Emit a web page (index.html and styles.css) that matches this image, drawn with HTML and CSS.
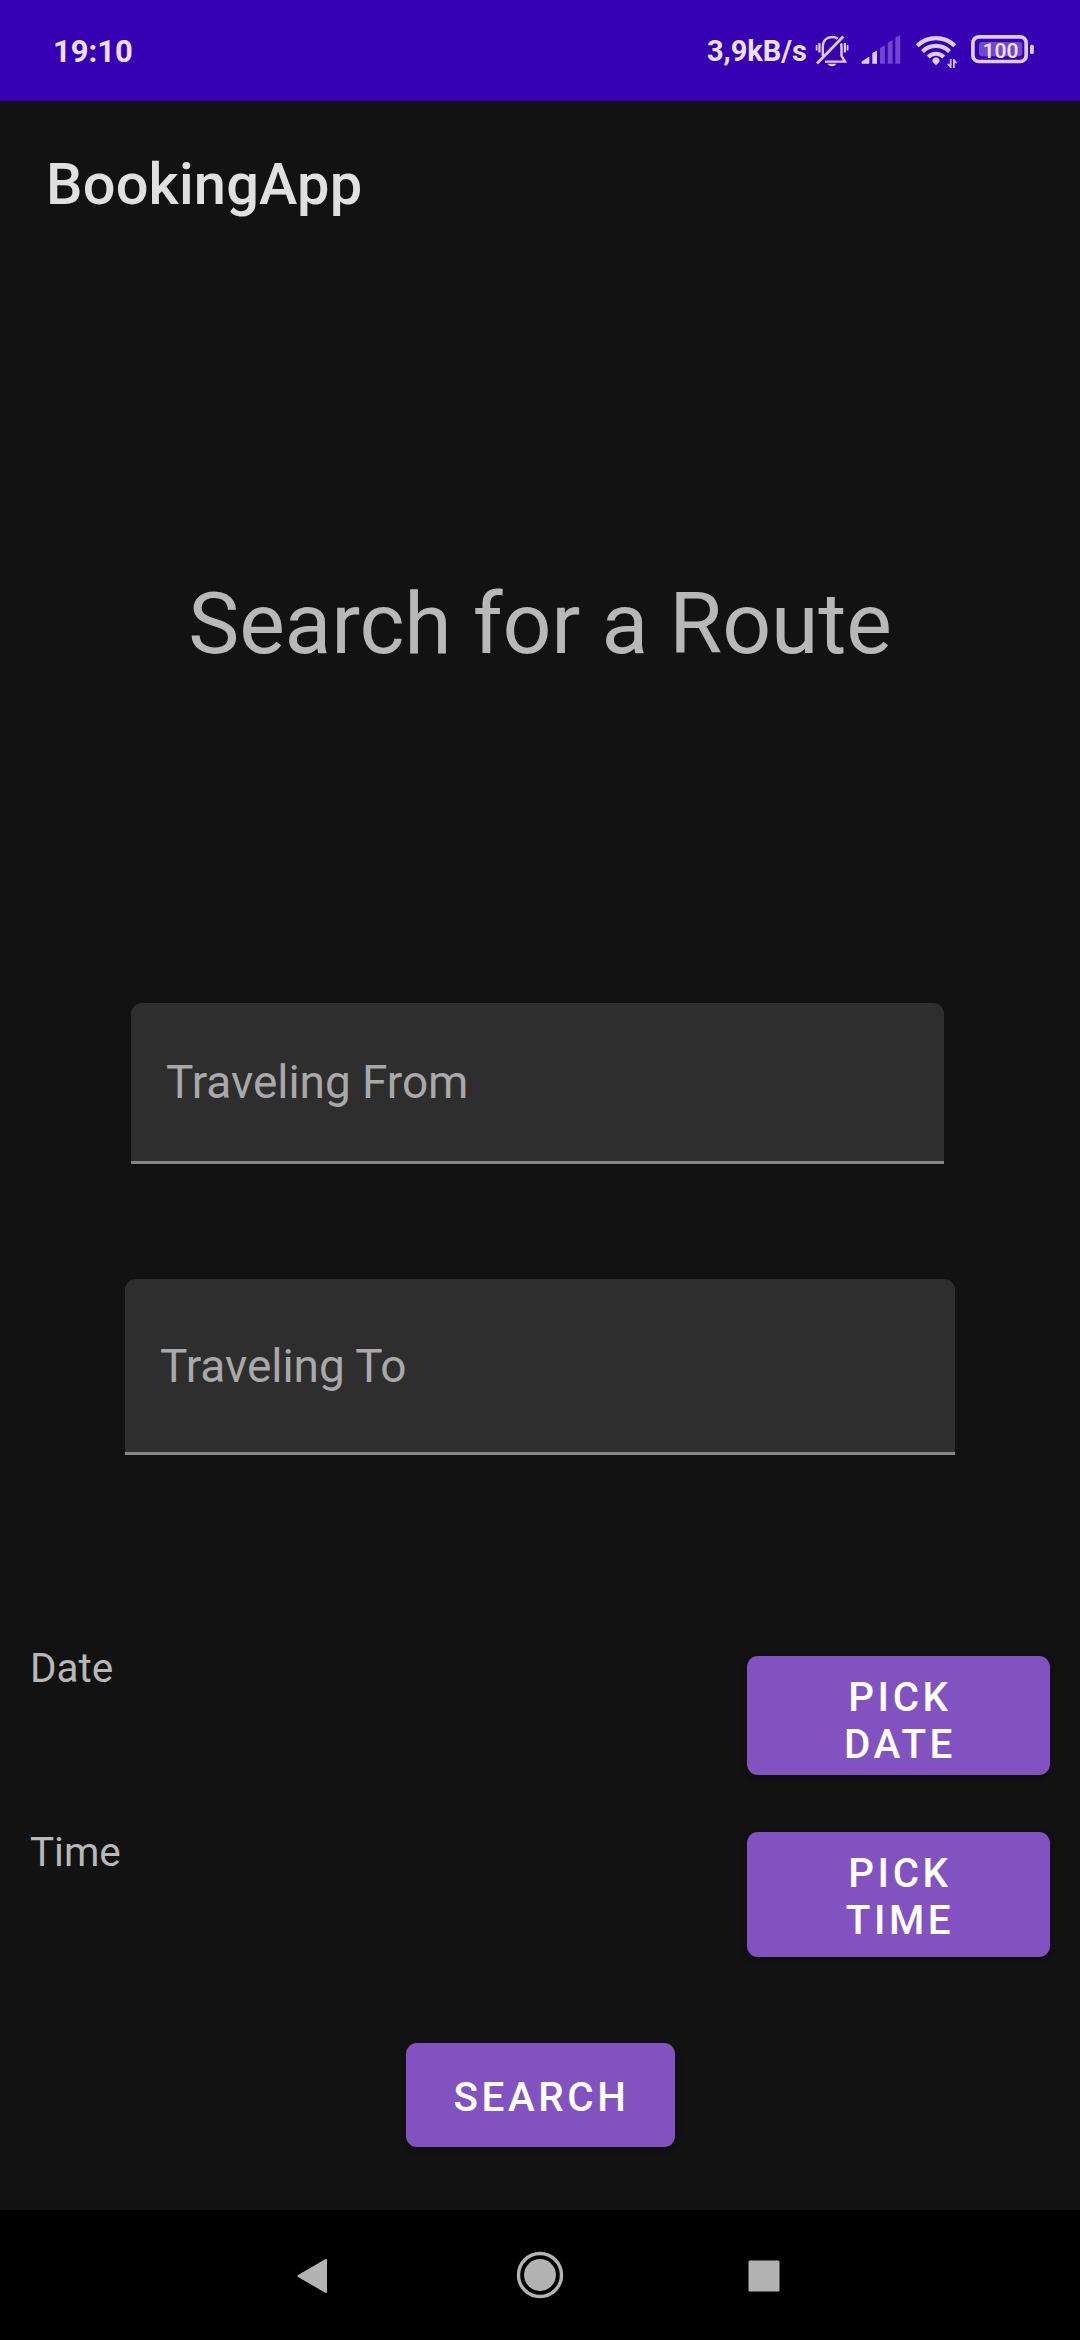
FILE: index.html
```html
<!DOCTYPE html>
<html lang="en">
<head>
<meta charset="utf-8">
<title>BookingApp</title>
<link rel="stylesheet" href="styles.css">
</head>
<body>
<div class="screen">
  <header class="status-bar">
    <span class="clock">19:10</span>
    <div class="status-right">
      <span class="net-speed">3,9kB/s</span>
      <svg class="icon-bell" width="34" height="34" viewBox="815 34 34 34" fill="none" stroke="#dccdfb" stroke-width="2.400">
        <path d="M822.8 56V46.500C822.8 40.500 827 37 832 37c2.300 0 4.200.6 5.700 1.700M841 43.500c.4 1.100.5 2.200.5 3.400V56l3.500 5.600H825"/>
        <path d="M817 63.500 843.300 36.500" stroke-width="2.700"/>
        <path d="M819.400 43v9.500M844.900 43v9.500" stroke-width="2.200"/>
        <path d="M816.600 45v5.500M847.600 45v5.500" stroke-width="1.700"/>
        <path d="M827.300 63.700h9.400q-1.800 2.600-4.700 2.600t-4.700-2.600z" fill="#dccdfb" stroke="none"/>
      </svg>
      <svg class="icon-signal" width="40" height="30" viewBox="861 34 40 30">
        <path fill="#dccdfb" d="M861.700 63.700V61.500l7.600-5V63.700zM872.300 63.700V53.300l4.700-2.800V63.700z"/>
        <path fill="#6f46cd" d="M880 63.700V48l4.900-2.800V63.700zM887.700 63.700V42.700l4.900-2.600V63.700zM895.300 63.700V37.600l4.900-2.600V63.700z"/>
      </svg>
      <svg class="icon-wifi" width="43" height="36" viewBox="915 34 43 36" fill="none" stroke="#dccdfb" stroke-width="4.200">
        <path d="M917.200 45.800a26.800 26.800 0 0 1 37.600 0"/>
        <path d="M922.500 51.600a19 19 0 0 1 27 0"/>
        <path d="M928.200 57a11 11 0 0 1 15.600 0"/>
        <path d="M936 65.200l-3.400-3.100a3.600 3.600 0 1 1 6.800 0z" fill="#dccdfb" stroke="none"/>
        <path d="M951.600 59v9h-1.400l-3.300-4.200h2.900V59zM953 68v-9h1.400l3.100 4.200h-2.700V68z" fill="#cdb9f5" stroke="none"/>
      </svg>
      <svg class="icon-battery" width="64" height="30" viewBox="970 34 64 30">
        <rect x="979" y="42" width="43.300" height="14.300" rx="3" fill="#6f46cd"/>
        <rect x="972.900" y="36.900" width="53.300" height="24.600" rx="6" fill="none" stroke="#dccdfb" stroke-width="3.700"/>
        <rect x="1030" y="44.700" width="3.800" height="9.300" rx="1.500" fill="#dccdfb"/>
        <text class="battery-level" x="1000.500" y="58" text-anchor="middle">100</text>
      </svg>
    </div>
  </header>

  <div class="app-bar">BookingApp</div>

  <main class="content">
    <h1 class="heading">Search for a Route</h1>
    <div class="field field-from"><span>Traveling From</span></div>
    <div class="field field-to"><span>Traveling To</span></div>
    <div class="row row-date">
      <span class="label">Date</span>
      <button class="btn btn-date" type="button">PICK<br>DATE</button>
    </div>
    <div class="row row-time">
      <span class="label">Time</span>
      <button class="btn btn-time" type="button">PICK<br>TIME</button>
    </div>
    <button class="btn btn-search" type="button">SEARCH</button>
  </main>

  <nav class="nav-bar">
    <svg class="nav-back" width="32" height="38" viewBox="0 0 32 38"><path d="M2.500 17.700 28.800 2.400Q31 1.400 31 3.500V34.500Q31 36.600 28.800 35.500L2.500 20.300Q.2 19 2.500 17.700z" fill="#b3b3b3"/></svg>
    <svg class="nav-home" width="48" height="48" viewBox="0 0 48 48"><circle cx="24" cy="24" r="21.500" fill="none" stroke="#b3b3b3" stroke-width="3.400"/><circle cx="24" cy="24" r="15.900" fill="#b3b3b3"/></svg>
    <svg class="nav-recent" width="32" height="32" viewBox="0 0 32 32"><rect x=".5" y=".5" width="31" height="31" rx="1.500" fill="#b3b3b3"/></svg>
  </nav>
</div>
</body>
</html>
```

FILE: styles.css
```css
* { box-sizing: border-box; }

body {
  margin: 0;
  background: #121212;
  font-family: Roboto, "Noto Sans", sans-serif;
}

.screen {
  display: flex;
  flex-direction: column;
  width: 1080px;
  height: 2340px;
  overflow: hidden;
  background: #121212;
}

.status-bar {
  display: flex;
  justify-content: space-between;
  align-items: flex-start;
  height: 101px;
  padding: 34px 46px 0 53px;
  background: #3700b3;
  color: #ebe0ff;
}

.clock {
  font-size: 31px;
  font-weight: 700;
  line-height: 35px;
}

.net-speed {
  font-size: 29px;
  font-weight: 700;
  line-height: 35px;
}

.status-right { display: flex; align-items: flex-start; }
.icon-bell { margin-left: 8px; }
.icon-signal { margin-left: 12px; }
.icon-wifi { margin-left: 14px; }
.icon-battery { margin-left: 12px; }

.battery-level {
  font-size: 21px;
  font-weight: 600;
  fill: #ebe0ff;
}

.app-bar {
  height: 154px;
  padding: 49px 0 0 46px;
  font-size: 57.75px;
  font-weight: 500;
  line-height: 68px;
  letter-spacing: 0.2px;
  color: #e0e0e0;
}

.content {
  display: flex;
  flex: 1;
  flex-direction: column;
  align-items: flex-start;
}

.heading {
  align-self: center;
  margin: 318px 0 0;
  font-size: 86px;
  font-weight: 400;
  line-height: 102px;
  letter-spacing: -0.15px;
  color: #b8b8b8;
}

.field {
  display: flex;
  align-items: center;
  padding-left: 35px;
  border-bottom: 3px solid #868686;
  border-radius: 11px 11px 0 0;
  background: #2e2e2e;
  font-size: 46px;
  line-height: 54px;
  letter-spacing: -0.05px;
  color: #a9a9a9;
}

.field-from { width: 813px; height: 161px; margin: 328px 0 0 131px; }
.field-to { width: 830px; height: 176px; margin: 115px 0 0 125px; padding-top: 1px; }

.row {
  display: flex;
  justify-content: space-between;
  align-items: flex-start;
  width: 1080px;
  padding: 0 30px;
}

.row-date { margin-top: 201px; }
.row-time { margin-top: 57px; }

.label {
  margin-top: -11px;
  font-size: 40.4px;
  line-height: 47px;
  color: #b8b8b8;
}

.row-time .label { margin-top: -3px; }

.btn {
  padding: 5px 0 0 3px;
  border: 0;
  border-radius: 11px;
  background: #8352c1;
  box-shadow: 0 3px 6px rgba(0, 0, 0, 0.3);
  color: #fff;
  font-family: inherit;
  font-size: 40.4px;
  font-weight: 500;
  line-height: 47px;
  letter-spacing: 0.089em;
}

.btn-date { width: 303px; height: 119px; padding-top: 11px; }
.btn-time { width: 303px; height: 125px; }
.btn-search { align-self: center; width: 269px; height: 104px; margin-top: 86px; }

.nav-bar {
  display: grid;
  grid-template-columns: 1fr 48px 1fr;
  align-items: center;
  height: 130px;
  background: #000;
}

.nav-back { margin: 2px 0 0 296px; }
.nav-home { width: 48px; }
.nav-recent { margin: 1px 0 0 184px; }
```
